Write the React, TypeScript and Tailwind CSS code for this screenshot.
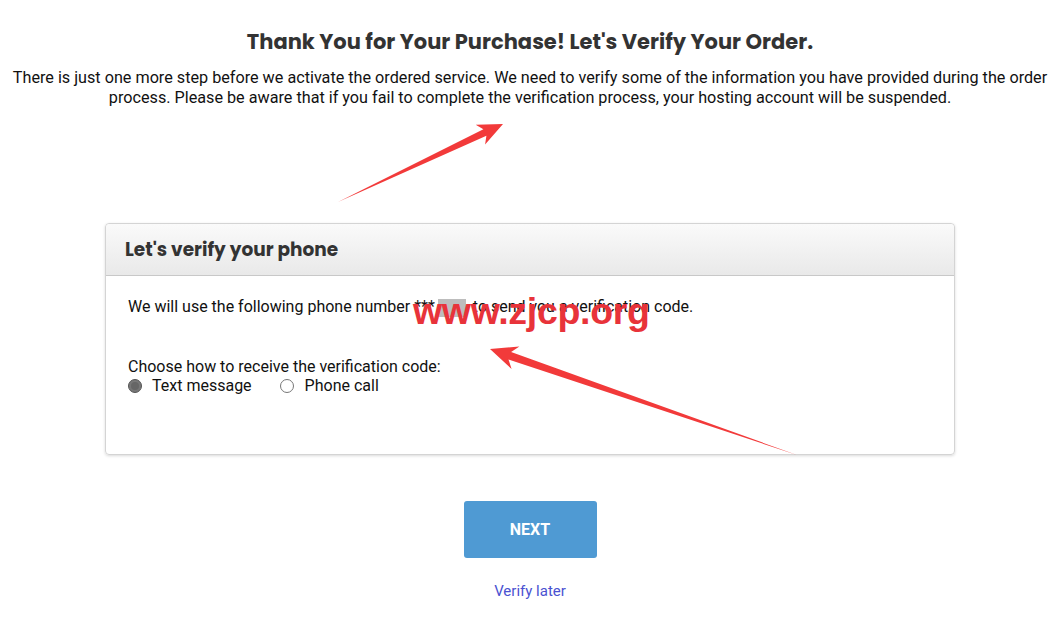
export default function App() {
  return (
    <div className="relative min-h-[620px] w-[1060px] bg-white font-['Roboto',sans-serif] text-[#222]">
      <div className="flex flex-col items-center pt-[28px]">
        <h1 className="font-['Poppins','Inter',sans-serif] text-[21px] font-bold leading-[28px] text-[#333]">
          Thank You for Your Purchase! Let's Verify Your Order.
        </h1>
        <p className="mt-[12px] text-center text-[16.2px] leading-[20px] text-[#111]">
          There is just one more step before we activate the ordered service. We need to verify some of the information you have provided during the order
          <br />
          process. Please be aware that if you fail to complete the verification process, your hosting account will be suspended.
        </p>
      </div>

      <div className="mx-[105px] mt-[115px] h-[232px] rounded-[4px] border border-[#d4d4d4] shadow-[0_1px_3px_rgba(0,0,0,0.15)]">
        <div className="flex h-[52px] items-center rounded-t-[4px] border-b border-[#c8c8c8] bg-gradient-to-b from-[#fafafa] to-[#e9e9e9] pl-[19px]">
          <h2 className="font-['Poppins','Inter',sans-serif] text-[18.5px] font-bold text-[#333]">Let's verify your phone</h2>
        </div>
        <div className="px-[22px] pt-[21px] text-[16px] leading-[20px] text-[#111]">
          <p className="h-[20px]">
            We will use the following phone number ***
            <span className="mx-[3px] inline-block h-[18px] w-[28px] align-middle bg-[#bdbdbd]" /> to send you a verification code.
          </p>
          <p className="mt-[40px]">Choose how to receive the verification code:</p>
          <div className="mt-[-1px] flex items-center">
            <label className="flex items-center">
              <span className="flex h-[14px] w-[14px] items-center justify-center rounded-full border border-[#555] bg-[#777]">
                <span className="h-[8px] w-[8px] rounded-full bg-[#666]" />
              </span>
              <span className="ml-[10px]">Text message</span>
            </label>
            <label className="ml-[28px] flex items-center">
              <span className="h-[14px] w-[14px] rounded-full border border-[#777] bg-white" />
              <span className="ml-[11px]">Phone call</span>
            </label>
          </div>
        </div>
      </div>

      <div className="mt-[46px] flex flex-col items-center">
        <button className="h-[57px] w-[133px] rounded-[3px] bg-[#4f9ad3] text-[16px] font-bold text-white">NEXT</button>
        <a className="mt-[22px] text-[15px] text-[#4a52d1]">Verify later</a>
      </div>

      {/* annotation overlay */}
      <svg className="pointer-events-none absolute left-0 top-0" width="1060" height="620" viewBox="0 0 1060 620">
        <polygon points="338,202 486.4,135.7 485.1,144.6 503,124 475.7,124.8 483.4,129.3" fill="#f23a3a" />
        <polygon points="797,455 511.1,352 519.4,346.5 490,349 511.6,369.1 508.5,359.6" fill="#f23a3a" />
      </svg>
      <div className="pointer-events-none absolute left-[413px] top-[283px] font-['Liberation_Sans',sans-serif] text-[37.5px] font-bold tracking-[-0.3px] text-[#e8333a]">
        www.zjcp.org
      </div>
    </div>
  )
}
